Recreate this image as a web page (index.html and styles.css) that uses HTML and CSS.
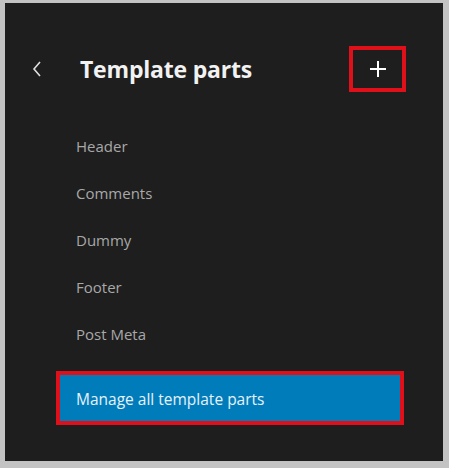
FILE: index.html
```html
<!doctype html>
<html>
<head>
<meta charset="utf-8">
<title>Template parts</title>
<link rel="stylesheet" href="styles.css">
</head>
<body>
<div class="panel">
	<div class="head">
		<a href="#" class="back">
			<svg width="12" height="18" viewBox="0 0 12 18"><path d="M9 2 L3 9 L9 16" fill="none" stroke="#e0e0e0" stroke-width="1.6"/></svg>
		</a>
		<h1>Template parts</h1>
		<a href="#" class="add">
			<svg width="18" height="18" viewBox="0 0 18 18"><path d="M9 1 V17 M1 9 H17" fill="none" stroke="#fff" stroke-width="2"/></svg>
		</a>
	</div>
	<ul class="list">
		<li>Header</li>
		<li>Comments</li>
		<li>Dummy</li>
		<li>Footer</li>
		<li>Post Meta</li>
	</ul>
	<a href="#" class="manage">Manage all template parts</a>
</div>
</body>
</html>
```

FILE: styles.css
```css
body,h1,ul,li,a{margin: 0; padding: 0;}
ul{list-style: none;}
a{text-decoration: none;}
body{
	background-color: #c3c3c3;
	font-family: "Open Sans", "Noto Sans", sans-serif;
}
.panel{
	width: 438px;
	height: 458px;
	margin: 3px 0 0 5px;
	background-color: #1e1e1e;
	overflow: hidden;
}
.head{
	display: flex;
	align-items: center;
	height: 46px;
	margin-top: 43px;
	padding-left: 26px;
}
.back{
	display: flex;
	width: 12px;
	height: 18px;
}
.head h1{
	margin-left: 37px;
	font-size: 23px;
	font-weight: 700;
	color: #f2f2f2;
	letter-spacing: -0.2px;
}
.add{
	display: flex;
	align-items: center;
	justify-content: center;
	width: 49px;
	height: 38px;
	margin-left: auto;
	margin-right: 37px;
	border: 4px solid #e0101a;
}
.list{
	margin-top: 31px;
	padding-left: 71px;
}
.list li{
	height: 47px;
	line-height: 47px;
	font-size: 15px;
	color: #a8a8a8;
}
.manage{
	display: block;
	width: 324px;
	height: 46px;
	margin: 13px 0 0 51px;
	padding-left: 16px;
	border: 4px solid #e0101a;
	background-color: #007cba;
	line-height: 48px;
	font-size: 15.5px;
	color: #e6f2fa;
}
```
